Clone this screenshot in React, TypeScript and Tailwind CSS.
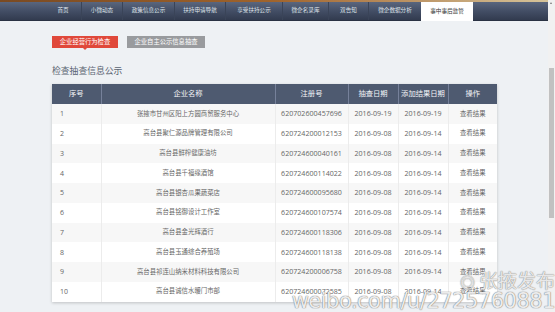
import React from "react";

const navItems: { label: string; w: string; active?: boolean }[] = [
  { label: "首页", w: "w-[36px]" },
  { label: "小微动态", w: "w-[41px]" },
  { label: "政策信息公示", w: "w-[52px]" },
  { label: "扶持申请导航", w: "w-[51px]" },
  { label: "享受扶持公示", w: "w-[57px]" },
  { label: "微企名录库", w: "w-[46px]" },
  { label: "双告知", w: "w-[40px]" },
  { label: "微企数据分析", w: "w-[53px]" },
  { label: "事中事后监管", w: "w-[52px]", active: true },
];

const rows = [
  ["1", "张掖市甘州区阳上方圆商贸服务中心", "620702600457696", "2016-09-19", "2016-09-19"],
  ["2", "高台县聚仁源品牌管理有限公司", "620724200012153", "2016-09-08", "2016-09-14"],
  ["3", "高台县鲜榨健康油坊", "620724600040161", "2016-09-08", "2016-09-14"],
  ["4", "高台县千福缘酒馆", "620724600114022", "2016-09-08", "2016-09-14"],
  ["5", "高台县银杏瓜果蔬菜店", "620724600095680", "2016-09-08", "2016-09-14"],
  ["6", "高台县铭御设计工作室", "620724600107574", "2016-09-08", "2016-09-14"],
  ["7", "高台县金光辉酒行", "620724600118306", "2016-09-08", "2016-09-14"],
  ["8", "高台县玉通综合养殖场", "620724600118138", "2016-09-08", "2016-09-14"],
  ["9", "高台县祁连山纳米材料科技有限公司", "620724200006758", "2016-09-08", "2016-09-14"],
  ["10", "高台县诚信水暖门市部", "620724600072585", "2016-09-08", "2016-09-14"],
];

export default function App() {
  return (
    <div className="relative flex w-[555px] h-[312px] overflow-hidden bg-[#eef1f4] font-['Open_Sans','Noto_Sans_CJK_SC',sans-serif]">
      <div className="flex flex-col w-[548px]">
        <div className="h-[2px] bg-gradient-to-r from-[#7a4a22] via-[#a0642c] to-[#d6c49a]" />
        <div className="flex h-[19px] bg-gradient-to-b from-[#5a667e] via-[#434e65] to-[#323b4f] border-b border-[#2a3243]">
          <div className="w-[45px]" />
          {navItems.map((it, i) => (
            <div
              key={it.label}
              className={`${it.w} flex items-center justify-center text-[5.6px] leading-none ${
                it.active
                  ? "bg-white text-[#333] -mb-[1px]"
                  : `text-[#dfe3ea] ${i > 0 ? "border-l border-[#3a4458]" : ""}`
              }`}
            >
              {it.label}
            </div>
          ))}
          <div className="flex-1" />
        </div>

        <div className="flex flex-col pl-[52px] w-[497px]">
          <div className="flex gap-[9px] mt-[15px]">
            <div className="relative w-[66px] h-[12px] bg-[#e0483a] text-white text-[6.3px] flex items-center justify-center leading-none">
              企业经营行为检查
              <div className="absolute left-[31px] -bottom-[2px] w-0 h-0 border-l-[2px] border-r-[2px] border-t-[2px] border-l-transparent border-r-transparent border-t-[#e0483a]" />
            </div>
            <div className="w-[78px] h-[12px] bg-[#999b9e] text-white text-[6.3px] flex items-center justify-center leading-none">
              企业自主公示信息抽查
            </div>
          </div>

          <div className="mt-[17px] h-[12px] text-[8.8px] leading-[12px] text-[#5a6472]">检查抽查信息公示</div>

          <div className="mt-[7px] w-[445px] shadow-[0_1px_3px_rgba(0,0,0,0.2)]">
            <table className="w-[445px] table-fixed border-collapse">
              <colgroup>
                <col className="w-[49px]" />
                <col className="w-[174px]" />
                <col className="w-[73px]" />
                <col className="w-[50px]" />
                <col className="w-[50px]" />
                <col className="w-[49px]" />
              </colgroup>
              <thead>
                <tr className="h-[20px] bg-[#4e5a70] text-[#f2f4f7] text-[7.3px] leading-none">
                  {["序号", "企业名称", "注册号", "抽查日期", "添加结果日期", "操作"].map((h, i) => (
                    <th
                      key={h}
                      className={`font-normal text-center p-0 ${i > 0 ? "border-l border-[#76819a]" : ""}`}
                    >
                      {h}
                    </th>
                  ))}
                </tr>
              </thead>
              <tbody>
                {rows.map((r, idx) => (
                  <tr
                    key={r[0]}
                    className={`h-[19.75px] text-[#666] leading-none ${idx % 2 === 0 ? "bg-[#f7f7f7]" : "bg-white"}`}
                  >
                    <td className="text-[7px] text-left pl-[8px] p-0">{r[0]}</td>
                    <td className="text-[6.4px] text-center p-0 border-l border-[#ececec]">{r[1]}</td>
                    <td className="text-[7.1px] text-center p-0 border-l border-[#ececec]">{r[2]}</td>
                    <td className="text-[7.1px] text-center p-0 border-l border-[#ececec]">{r[3]}</td>
                    <td className="text-[7.1px] text-center p-0 border-l border-[#ececec]">{r[4]}</td>
                    <td className="text-[6.4px] text-center p-0 border-l border-[#ececec]">查看结果</td>
                  </tr>
                ))}
              </tbody>
            </table>
          </div>
        </div>
      </div>

      <div className="relative w-[7px] h-full bg-[#f1f1f1]">
        <div className="absolute left-[2px] top-[2px] w-0 h-0 border-l-[1.5px] border-r-[1.5px] border-b-[2px] border-l-transparent border-r-transparent border-b-[#777]" />
        <div className="absolute left-[1px] top-[68px] w-[5px] h-[150px] bg-[#c1c1c1]" />
      </div>

      <div className="absolute right-[0px] top-[270px] text-[19px] leading-none text-white/80 font-['Noto_Sans_CJK_SC',sans-serif] [text-shadow:0_0_1px_#888,0_0_1px_#888]">
        <span className="text-[15px] mr-[4px]">◎</span>张掖发布
      </div>
      <div className="absolute right-[0px] top-[291px] text-[21px] leading-none text-white/85 font-['DejaVu_Sans',sans-serif] tracking-[-0.5px] [text-shadow:0_0_1px_#777,0_0_1px_#777]">
        weibo.com/u/2725760881
      </div>
    </div>
  );
}
